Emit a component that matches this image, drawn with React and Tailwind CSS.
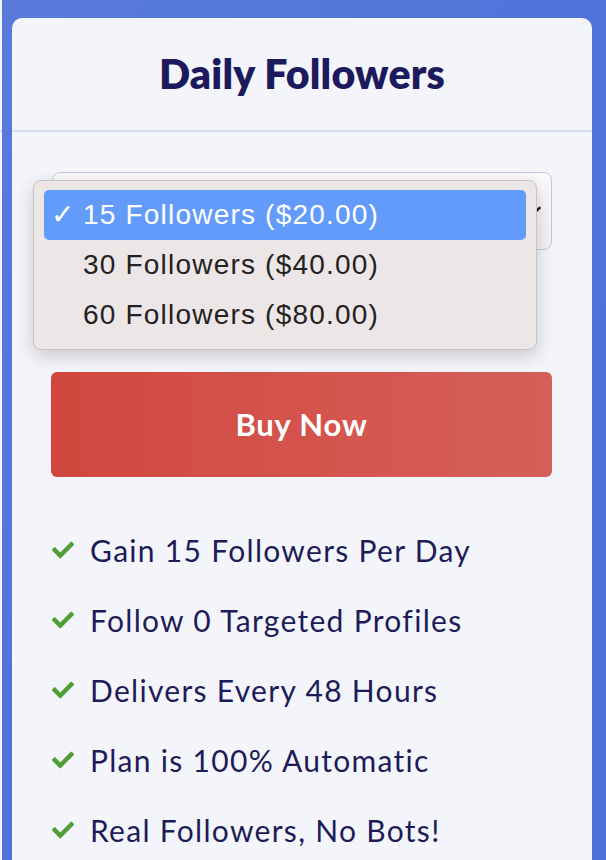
import React, { useState } from 'react';

const options = [
  { label: '15 Followers ($20.00)', value: 15 },
  { label: '30 Followers ($40.00)', value: 30 },
  { label: '60 Followers ($80.00)', value: 60 },
];

const features = [
  'Gain 15 Followers Per Day',
  'Follow 0 Targeted Profiles',
  'Delivers Every 48 Hours',
  'Plan is 100% Automatic',
  'Real Followers, No Bots!',
];

function CheckIcon() {
  return (
    <svg viewBox="0 0 512 512" className="w-[22px] h-[22px] shrink-0" fill="#4f9f37">
      <path d="M173.9 439.4l-166.4-166.4c-10-10-10-26.2 0-36.2l36.2-36.2c10-10 26.2-10 36.2 0L192 312.7 432.1 72.6c10-10 26.2-10 36.2 0l36.2 36.2c10 10 10 26.2 0 36.2L210.1 439.4c-10 10-26.2 10-36.2 0z" />
    </svg>
  );
}

export default function App() {
  const [selected, setSelected] = useState(15);

  return (
    <div className="min-h-[860px] h-[860px] overflow-hidden bg-gradient-to-br from-[#5a7bdc] via-[#4f73d9] to-[#4b70d8] flex gap-[10px] pt-[18px]">
      <div className="w-[2px] shrink-0 bg-[#f4f5fa] -mt-[18px] flex flex-col">
        <div className="h-[130px]" />
        <div className="h-[2px] bg-[#d6def3]" />
      </div>

      <div className="relative w-[580px] shrink-0 bg-[#f4f5fa] rounded-t-[10px]">
        <div className="h-[112px] flex items-center justify-center">
          <h2 className="text-[41px] font-extrabold text-[#1c1a5c] tracking-[0.2px] font-['Lato',sans-serif]">
            Daily Followers
          </h2>
        </div>
        <div className="h-[2px] bg-[#d6def3]" />

        <div className="px-[40px] pt-[40px]">
          <div className="relative h-[78px] rounded-[8px] border border-[#c3c6de] bg-gradient-to-b from-[#fafafa] to-[#f1f1f3]">
            <svg viewBox="0 0 20 20" className="absolute right-[9px] top-[30px] w-[16px] h-[16px]" fill="none" stroke="#1f1f1f" strokeWidth="3" strokeLinecap="round">
              <path d="M3 6l7 7 7-7" />
            </svg>
          </div>

          <button className="mt-[122px] w-[501px] -ml-[1px] h-[105px] rounded-[6px] bg-gradient-to-r from-[#d1473e] to-[#d65f5a] text-white text-[31px] font-bold tracking-[0.8px] font-['Lato',sans-serif]">
            Buy Now
          </button>

          <ul className="mt-[38px] flex flex-col">
            {features.map((f) => (
              <li key={f} className="h-[70px] flex items-center gap-[16px] text-[30px] text-[#1d1c58] font-['Lato',sans-serif] tracking-[1.3px]">
                <CheckIcon />
                <span>{f}</span>
              </li>
            ))}
          </ul>
        </div>

        <div className="absolute left-[21px] top-[162px] w-[504px] h-[170px] rounded-[8px] border border-[#c9c3c3] bg-[#ede6e6] shadow-[0_6px_18px_rgba(0,0,0,0.18)] px-[10px] pt-[9px] font-['Liberation_Sans',sans-serif]">
          {options.map((o) => {
            const active = o.value === selected;
            return (
              <div
                key={o.value}
                onClick={() => setSelected(o.value)}
                className={
                  active
                    ? 'h-[50px] rounded-[5px] bg-[#639bfa] text-white flex items-center text-[28px] tracking-[1.2px]'
                    : 'h-[50px] rounded-[5px] text-[#222222] flex items-center text-[28px] tracking-[1.2px]'
                }
              >
                <span className="w-[39px] pl-[7px] text-[28px]">{active ? '✓' : ''}</span>
                <span>{o.label}</span>
              </div>
            );
          })}
        </div>
      </div>
    </div>
  );
}
